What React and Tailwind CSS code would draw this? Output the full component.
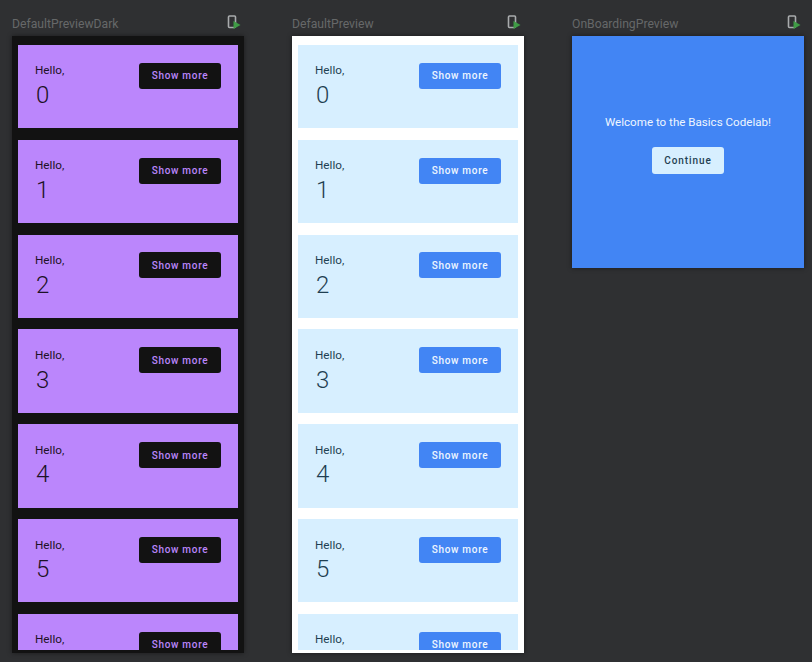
import React from 'react'

const rows = [0, 1, 2, 3, 4, 5, 6]

const PreviewIcon = () => (
  <svg width="14" height="14" viewBox="0 0 14 14" className="mr-[3px]">
    <rect x="1.5" y="1" width="7" height="11.5" rx="1" fill="none" stroke="#a9abad" strokeWidth="1.6" />
    <path d="M6.5 6 L13.5 10 L6.5 14 Z" fill="#3f9b45" />
  </svg>
)

const Title = ({ name }) => (
  <div className="h-[36px] flex items-start justify-between pt-[16px]">
    <span className="text-[12.2px] leading-[16px] text-[#666869]">{name}</span>
    <div className="-mt-[1px]">
      <PreviewIcon />
    </div>
  </div>
)

const Card = ({ n, dark }) => (
  <div className={`h-[83.2px] mb-[11.65px] shrink-0 flex justify-between pt-[17.4px] px-[17px] ${dark ? 'bg-[#bb86fc] text-[#1d1226]' : 'bg-[#d7efff] text-[#1f3f52]'}`}>
    <div>
      <p className="text-[11.7px] leading-[16px]">Hello,</p>
      {/* last card is cut off before its number shows */}
      {n < 6 && <p className="text-[24px] leading-[32px] pl-[1px] pt-[0.7px] font-light">{n}</p>}
    </div>
    <button className={`w-[82px] h-[26px] mt-[0.3px] rounded-[3px] text-[10px] font-medium tracking-[0.7px] ${dark ? 'bg-[#121212] text-[#bb86fc]' : 'bg-[#4285f4] text-[#eef6ff]'}`}>
      Show more
    </button>
  </div>
)

const Preview = ({ name, dark }) => (
  <div className="w-[232px]">
    <Title name={name} />
    <div className={`h-[617px] pt-[9px] pb-[3px] px-[6px] shadow-[0_0_5px_rgba(0,0,0,0.45)] ${dark ? 'bg-[#121212]' : 'bg-white'}`}>
      <div className="h-[605px] overflow-hidden flex flex-col">
        {rows.map((n) => (
          <Card key={n} n={n} dark={dark} />
        ))}
      </div>
    </div>
  </div>
)

export default function App() {
  return (
    <div className="w-[812px] h-[662px] overflow-hidden bg-[#2f3032] flex gap-[48px] pl-[12px] font-['Roboto',sans-serif]">
      <Preview name="DefaultPreviewDark" dark />
      <Preview name="DefaultPreview" />
      <div className="w-[232px]">
        <Title name="OnBoardingPreview" />
        <div className="h-[232px] bg-[#4285f4] flex flex-col items-center pt-[78px] shadow-[0_0_5px_rgba(0,0,0,0.45)]">
          <p className="text-[11.6px] leading-[16px] text-[#eef6ff]">Welcome to the Basics Codelab!</p>
          <button className="mt-[17px] w-[72px] h-[27px] rounded-[3px] bg-[#d7efff] text-[#1f3f52] text-[10px] font-medium tracking-[0.9px]">
            Continue
          </button>
        </div>
      </div>
    </div>
  )
}
